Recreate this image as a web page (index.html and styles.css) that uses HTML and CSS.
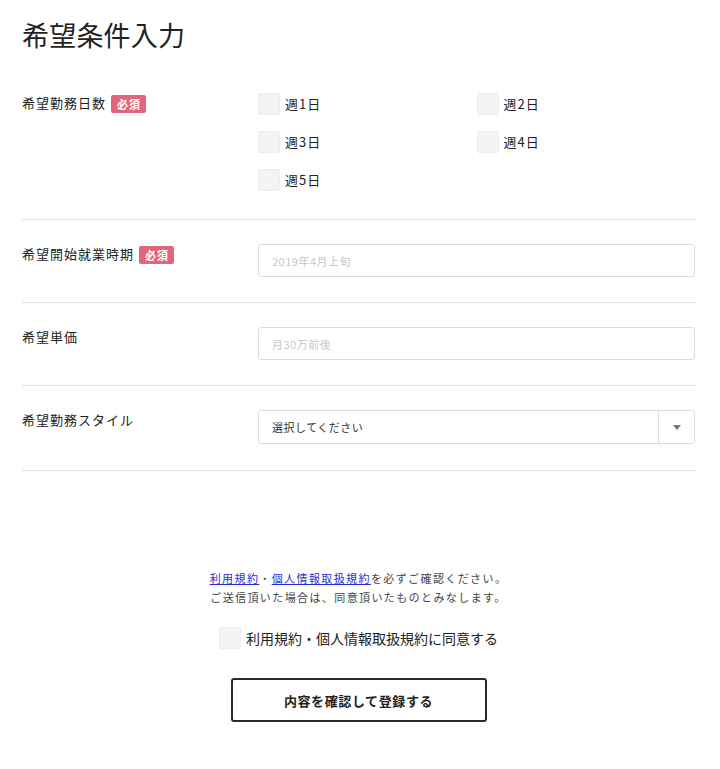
FILE: index.html
```html
<!DOCTYPE html>
<html lang="ja">
<head>
    <meta charset="UTF-8">
    <meta name="viewport" content="width=device-width, initial-scale=1.0">
    <title>希望条件入力</title>
    <link rel="stylesheet" href="styles.css">
</head>
<body>
    <div class="page">
        <h1 class="page-title">希望条件入力</h1>

        <div class="form-row">
            <div class="form-label">希望勤務日数<span class="required">必須</span></div>
            <div class="form-field">
                <div class="days">
                    <label class="check"><input type="checkbox"><span>週1日</span></label>
                    <label class="check"><input type="checkbox"><span>週2日</span></label>
                    <label class="check"><input type="checkbox"><span>週3日</span></label>
                    <label class="check"><input type="checkbox"><span>週4日</span></label>
                    <label class="check"><input type="checkbox"><span>週5日</span></label>
                </div>
            </div>
        </div>

        <div class="form-row">
            <div class="form-label">希望開始就業時期<span class="required">必須</span></div>
            <div class="form-field">
                <input type="text" class="text-input" placeholder="2019年4月上旬">
            </div>
        </div>

        <div class="form-row">
            <div class="form-label">希望単価</div>
            <div class="form-field">
                <input type="text" class="text-input" placeholder="月30万前後">
            </div>
        </div>

        <div class="form-row last">
            <div class="form-label">希望勤務スタイル</div>
            <div class="form-field">
                <div class="select-box">
                    <span class="select-value">選択してください</span>
                    <span class="select-arrow">
                        <svg width="8" height="5" viewBox="0 0 8 5"><path d="M0 0 L8 0 L4 5 Z" fill="#777"/></svg>
                    </span>
                </div>
            </div>
        </div>

        <div class="agree">
            <p class="agree-note">
                <a href="#">利用規約</a>・<a href="#">個人情報取扱規約</a>を必ずご確認ください。<br>
                ご送信頂いた場合は、同意頂いたものとみなします。
            </p>
            <label class="check agree-check"><input type="checkbox"><span>利用規約・個人情報取扱規約に同意する</span></label>
            <button class="submit-btn" type="button">内容を確認して登録する</button>
        </div>
    </div>
</body>
</html>
```

FILE: styles.css
```css
/* Base */
body {
    margin: 0;
    font-family: "Noto Sans CJK JP", "Noto Sans", sans-serif;
    color: #222;
    background-color: #fff;
}

.page {
    width: 673px;
    padding: 16px 25px 40px 22px;
}

.page-title {
    margin: 0 0 14px;
    font-size: 27px;
    line-height: 38px;
    font-weight: 400;
    letter-spacing: 0.2px;
}

/* Form rows */
.form-row {
    display: flex;
    padding: 25px 0 25px;
    border-bottom: 1px solid #e0e0e0;
}

.form-row + .form-row {
    padding-top: 24px;
}

.form-row.last {
    padding-bottom: 26px;
}

.form-label {
    width: 236px;
    flex-shrink: 0;
    display: flex;
    align-items: flex-start;
    font-size: 13px;
    line-height: 20px;
    letter-spacing: 1px;
}

.required {
    display: inline-block;
    margin-left: 5px;
    margin-top: 2px;
    padding: 0 5px 0 6px;
    height: 18px;
    line-height: 18px;
    font-size: 11px;
    font-weight: bold;
    color: #fff;
    background-color: #e2667b;
    border-radius: 2px;
}

.form-field {
    flex: 1;
}

/* Checkboxes */
.days {
    display: grid;
    grid-template-columns: 1fr 1fr;
    row-gap: 16px;
    padding-bottom: 3px;
}

.check {
    display: flex;
    align-items: center;
    font-size: 13px;
    line-height: 22px;
    letter-spacing: 1px;
}

.check input {
    appearance: none;
    -webkit-appearance: none;
    margin: 0 5px 0 0;
    width: 22px;
    height: 22px;
    background-color: #f4f4f4;
    border: 1px solid #ededed;
    border-radius: 2px;
}

/* Inputs */
.text-input {
    display: block;
    box-sizing: border-box;
    width: 100%;
    height: 33px;
    padding: 0 13px;
    border: 1px solid #dcdcdc;
    border-radius: 3px;
    font-family: inherit;
    font-size: 11px;
    letter-spacing: 0.5px;
    color: #222;
}

.text-input::placeholder {
    color: #c8c8c8;
}

.select-box {
    display: flex;
    box-sizing: border-box;
    height: 34px;
    border: 1px solid #dcdcdc;
    border-radius: 3px;
}

.select-value {
    flex: 1;
    display: flex;
    align-items: center;
    padding-left: 13px;
    font-size: 11px;
    letter-spacing: 0.5px;
    color: #333;
}

.select-arrow {
    width: 35px;
    display: flex;
    align-items: center;
    justify-content: center;
    border-left: 1px solid #dcdcdc;
}

/* Agreement */
.agree {
    display: flex;
    flex-direction: column;
    align-items: center;
    margin-top: 98px;
}

.agree-note {
    margin: 0;
    text-align: center;
    font-size: 11px;
    line-height: 19px;
    letter-spacing: 1.4px;
    color: #444;
}

.agree-note a {
    color: #2b2bd6;
    text-decoration: underline;
}

.agree-check {
    margin-top: 20px;
    font-size: 14px;
    letter-spacing: 0;
}

.submit-btn {
    margin-top: 29px;
    width: 256px;
    height: 44px;
    border: 2px solid #2a2a2a;
    border-radius: 3px;
    background-color: #fff;
    font-family: inherit;
    font-size: 13px;
    font-weight: bold;
    letter-spacing: 0.6px;
    color: #222;
    cursor: pointer;
}
```
